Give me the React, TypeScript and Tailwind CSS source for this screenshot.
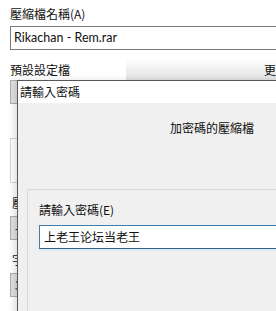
import React from "react";

const cjk = { fontFamily: '"Noto Sans CJK TC", "Noto Sans", sans-serif' };

function Combo({ children }: { children?: React.ReactNode }) {
  return (
    <div className="flex h-[24px] w-[40px] items-center border border-[#adadad] bg-[#e1e1e1] pl-[4px] text-[12px] text-black">
      {children}
    </div>
  );
}

export default function App() {
  return (
    <div
      className="relative h-[311px] w-[276px] overflow-hidden bg-white text-[12px] leading-[16px] text-[#111]"
      style={cjk}
    >
      {/* main window behind */}
      <div className="flex flex-col pl-[10px] pt-[6px]">
        <div>壓縮檔名稱(A)</div>
        <div
          className="mt-[4px] flex h-[24px] w-[300px] items-center border border-[#7a7a7a] bg-white pl-[3px] text-[12.5px]"
          style={{ fontFamily: 'Lato, "Noto Sans", sans-serif' }}
        >
          Rikachan - Rem.rar
        </div>
        <div className="mt-[12px] flex h-[16px] items-center">
          <span>預設設定檔</span>
          <div className="ml-auto flex h-[22px] w-[150px] items-end justify-end border-b border-[#8c8c8c] bg-gradient-to-b from-white to-[#e2e2e2] pb-[2px]">
            <span className="-mr-[12px]">更新</span>
          </div>
        </div>
        <div className="mt-[2px]">
          <Combo />
        </div>
        <div className="mt-[34px] h-[45px] w-[40px] border border-[#d5d5d5]" />
        <div className="mt-[12px] pl-[2px]">壓</div>
        <div className="mt-[5px]">
          <Combo>-</Combo>
        </div>
        <div className="mt-[12px] pl-[2px]">字</div>
        <div className="mt-[5px]">
          <Combo>3</Combo>
        </div>
      </div>

      {/* password dialog on top */}
      <div className="absolute left-[17px] top-[80px] -right-[20px] -bottom-[20px] flex flex-col border-l border-t border-[#575757] bg-[#f0f0f0] shadow-[-3px_0_6px_rgba(0,0,0,0.12)]">
        <div className="flex h-[22px] items-center bg-white pl-[2px]">請輸入密碼</div>
        <div className="mt-[17px] pl-[152px]">加密碼的壓縮檔</div>
        <div className="ml-[9px] mt-[53px] flex-1 border-l border-t border-[#dadada] pl-[11px] pt-[12px]">
          <div>請輸入密碼(E)</div>
          <div className="mt-[7px] flex h-[24px] w-[300px] items-center border border-[#3d7fae] border-b-[#2f5f82] bg-white pl-[4px] shadow-[0_2px_0_#dcebf6]">
            上老王论坛当老王
          </div>
        </div>
      </div>
    </div>
  );
}
